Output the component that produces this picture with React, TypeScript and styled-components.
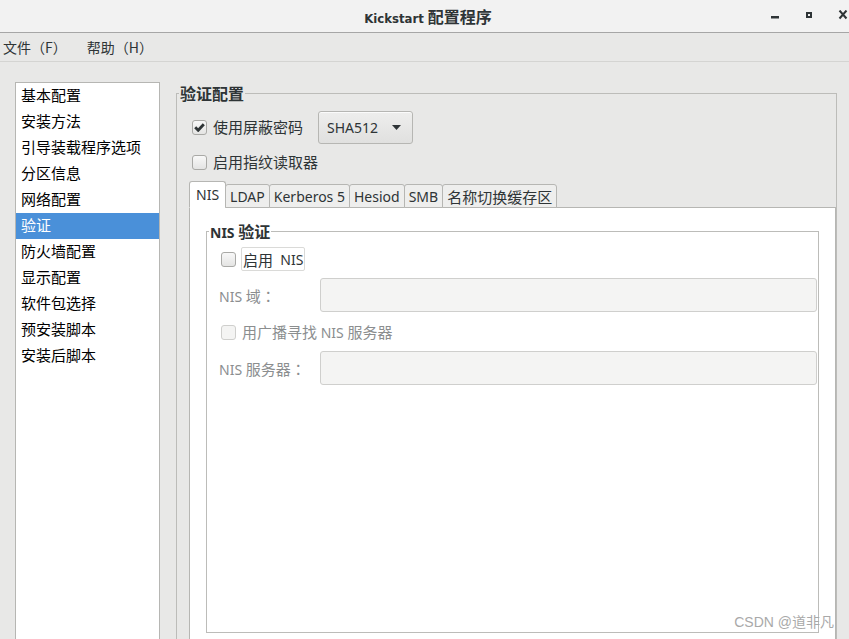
import React from 'react';
import styled, { createGlobalStyle } from 'styled-components';

const GlobalStyle = createGlobalStyle`
  html, body {
    margin: 0;
    padding: 0;
  }
  body {
    background: #e8e8e7;
    font-family: "Noto Sans", "Noto Sans CJK SC", sans-serif;
    font-size: 14px;
    color: #2e3436;
    overflow: hidden;
  }
`;

const Window = styled.div`
  position: relative;
  width: 849px;
  height: 639px;
  display: flex;
  flex-direction: column;
  overflow: hidden;
  background: #e8e8e7;
`;

const TitleBar = styled.div`
  flex: none;
  height: 32px;
  display: grid;
  grid-template-columns: 1fr auto 1fr;
  align-items: center;
  background: #f2f2f2;
  border-bottom: 1px solid #a6a6a6;
`;

const Title = styled.div`
  grid-column: 2;
  padding-left: 7px;
  font-family: "DejaVu Sans Condensed", "Liberation Sans", "Noto Sans CJK SC", sans-serif;
  font-weight: bold;
  font-size: 13px;
  color: #2e3436;
  white-space: nowrap;
`;

const WinButtons = styled.div`
  justify-self: end;
  display: flex;
  gap: 22px;
  height: 32px;
`;

const WinButton = styled.span`
  width: 12px;
  height: 32px;
  display: flex;
  align-items: center;
`;

const Zh = styled.span<{ $size?: number }>`
  font-family: "Noto Sans CJK SC", sans-serif;
  font-size: ${p => p.$size ?? 15}px;
`;

// centred full-width colon, as GTK draws it
const Colon = styled.span`
  font-family: "Noto Sans CJK JP", sans-serif;
  font-size: 15px;
`;

const MenuBar = styled.div`
  flex: none;
  height: 28px;
  display: flex;
  align-items: center;
  gap: 20px;
  padding-left: 3px;
  border-bottom: 1px solid #d4d4d2;
`;

const MenuItem = styled.span`
  font-family: "Noto Sans CJK SC", sans-serif;
  font-size: 14px;
  color: #2e3436;
`;

const Body = styled.div`
  flex: 1;
  min-height: 0;
  display: flex;
  align-items: flex-start;
  gap: 16px;
  padding: 20px 0 0 15px;
`;

const SideList = styled.ul`
  flex: none;
  width: 145px;
  height: 620px;
  box-sizing: border-box;
  margin: 0;
  padding: 0;
  list-style: none;
  background: #fff;
  border: 1px solid #b6b6b3;
`;

const SideItem = styled.li<{ $selected?: boolean }>`
  height: 26px;
  line-height: 24px;
  padding-left: 5px;
  font-family: "Noto Sans CJK SC", sans-serif;
  font-size: 15px;
  color: ${p => (p.$selected ? '#fff' : '#000')};
  background: ${p => (p.$selected ? '#4a90d9' : 'transparent')};
`;

const Frame = styled.fieldset`
  flex: none;
  width: 661px;
  height: 620px;
  box-sizing: border-box;
  margin: 1px 0 0 0;
  padding: 0;
  min-width: 0;
  border: 1px solid #bcbcb9;
`;

const FrameLegend = styled.legend`
  margin-left: 2px;
  padding: 0 1px;
  height: 20px;
  line-height: 20px;
  font-weight: bold;
  color: #2e3436;
`;

const FrameBody = styled.div`
  padding: 7px 0 0 12px;
  display: flex;
  flex-direction: column;
`;

const CheckRow = styled.div<{ $height: number; $top?: number; $indent?: number }>`
  display: flex;
  align-items: center;
  height: ${p => p.$height}px;
  margin-top: ${p => p.$top ?? 0}px;
  padding-left: ${p => p.$indent ?? 3}px;
`;

const Box = styled.span<{ $disabled?: boolean }>`
  flex: none;
  width: 15px;
  height: 15px;
  box-sizing: border-box;
  border: 1px solid ${p => (p.$disabled ? '#cfcfcd' : '#a9a9a6')};
  border-radius: 3px;
  background: ${p => (p.$disabled ? '#f4f4f3' : 'linear-gradient(#f8f8f8, #e4e4e3)')};
  display: flex;
  align-items: center;
  justify-content: center;
`;

const CheckText = styled.span<{ $disabled?: boolean }>`
  margin-left: 6px;
  line-height: 20px;
  color: ${p => (p.$disabled ? '#8b8e8f' : '#2e3436')};
  white-space: pre;
`;

const FocusLabel = styled.span`
  margin-left: 5px;
  height: 24px;
  box-sizing: border-box;
  padding: 0 1px;
  border: 1px solid #dadad8;
  border-radius: 2px;
  display: flex;
  align-items: center;
  white-space: pre;
  color: #2e3436;
`;

const Combo = styled.div`
  margin-left: 15px;
  width: 95px;
  height: 33px;
  box-sizing: border-box;
  padding: 0 11px 0 8px;
  display: flex;
  align-items: center;
  justify-content: space-between;
  border: 1px solid #b6b6b3;
  border-radius: 3px;
  background: linear-gradient(#eeeeed, #e0e0df);
  box-shadow: inset 0 1px #fbfbfb;
  color: #2e3436;
`;

const TabStrip = styled.div`
  margin-top: 7px;
  display: flex;
  align-items: flex-end;
  position: relative;
  z-index: 1;
  margin-bottom: -1px;
`;

const Tab = styled.div<{ $active?: boolean }>`
  height: ${p => (p.$active ? 27 : 24)}px;
  box-sizing: border-box;
  padding: 0 ${p => (p.$active ? 6 : 4)}px;
  margin-left: ${p => (p.$active ? 0 : -1)}px;
  display: flex;
  align-items: center;
  border: 1px solid #b6b6b3;
  border-bottom-color: ${p => (p.$active ? '#fff' : '#b6b6b3')};
  border-radius: 3px 3px 0 0;
  background: ${p => (p.$active ? '#fff' : '#eeeeed')};
  color: #2e3436;
  white-space: nowrap;
`;

const Panel = styled.div`
  height: 560px;
  box-sizing: border-box;
  padding: 13px 16px 0 16px;
  background: #fff;
  border: 1px solid #b6b6b3;
`;

const NisFrame = styled.fieldset`
  margin: 0;
  padding: 0;
  min-width: 0;
  height: 412px;
  box-sizing: border-box;
  border: 1px solid #bcbcb9;
`;

const NisBody = styled.div`
  display: flex;
  flex-direction: column;
`;

const FieldRow = styled.div`
  display: flex;
  align-items: center;
  height: 34px;
  margin-top: 7px;
  padding-left: 12px;
  margin-right: 1px;
`;

const FieldLabel = styled.span`
  flex: none;
  width: 101px;
  color: #8b8e8f;
  white-space: pre;
`;

const FieldInput = styled.div`
  flex: 1;
  height: 34px;
  box-sizing: border-box;
  border: 1px solid #cfcfcd;
  border-radius: 3px;
  background: #f4f4f3;
`;

const Watermark = styled.div`
  position: absolute;
  right: 15px;
  bottom: 8px;
  font-family: "Liberation Sans", "Noto Sans CJK SC", sans-serif;
  font-size: 14px;
  color: #a9a9a9;
`;

const Check = () => (
  <svg width="11" height="9" viewBox="0 0 11 9">
    <polyline points="1.2,4.3 4.2,7.3 9.8,1.2" fill="none" stroke="#2e3436" strokeWidth="2.8" />
  </svg>
);

const items = ['基本配置', '安装方法', '引导装载程序选项', '分区信息', '网络配置', '验证', '防火墙配置', '显示配置', '软件包选择', '预安装脚本', '安装后脚本'];

const tabs = ['LDAP', 'Kerberos 5', 'Hesiod', 'SMB'];

const App: React.FC = () => {
  return (
    <Window>
      <GlobalStyle />
      <TitleBar>
        <Title>
          Kickstart <Zh $size={16}>配置程序</Zh>
        </Title>
        <WinButtons>
          <WinButton>
            <svg width="12" height="12" viewBox="0 0 12 12">
              <rect x="2" y="6" width="8" height="2.5" fill="#2e3436" />
            </svg>
          </WinButton>
          <WinButton>
            <svg width="12" height="12" viewBox="0 0 12 12">
              <rect x="4" y="3" width="4" height="4" fill="none" stroke="#2e3436" strokeWidth="2" />
            </svg>
          </WinButton>
          <WinButton>
            <svg width="12" height="12" viewBox="0 0 12 12">
              <path d="M2.5 0.5 L9.5 8.5 M9.5 0.5 L2.5 8.5" stroke="#2e3436" strokeWidth="2" />
            </svg>
          </WinButton>
        </WinButtons>
      </TitleBar>

      <MenuBar>
        <MenuItem>文件（F）</MenuItem>
        <MenuItem>帮助（H）</MenuItem>
      </MenuBar>

      <Body>
        <SideList>
          {items.map(item => (
            <SideItem key={item} $selected={item === '验证'}>
              {item}
            </SideItem>
          ))}
        </SideList>

        <Frame>
          <FrameLegend>
            <Zh $size={16}>验证配置</Zh>
          </FrameLegend>
          <FrameBody>
            <CheckRow $height={34}>
              <Box>
                <Check />
              </Box>
              <CheckText>
                <Zh>使用屏蔽密码</Zh>
              </CheckText>
              <Combo>
                <span>SHA512</span>
                <svg width="9" height="5" viewBox="0 0 9 5">
                  <polygon points="0,0 9,0 4.5,5" fill="#2e3436" />
                </svg>
              </Combo>
            </CheckRow>
            <CheckRow $height={23} $top={7}>
              <Box />
              <CheckText>
                <Zh>启用指纹读取器</Zh>
              </CheckText>
            </CheckRow>

            <TabStrip>
              <Tab $active>NIS</Tab>
              {tabs.map(t => (
                <Tab key={t}>{t}</Tab>
              ))}
              <Tab>
                <Zh>名称切换缓存区</Zh>
              </Tab>
            </TabStrip>
            <Panel>
              <NisFrame>
                <FrameLegend>
                  NIS <Zh $size={16}>验证</Zh>
                </FrameLegend>
                <NisBody>
                  <CheckRow $height={24} $top={6} $indent={14}>
                    <Box />
                    <FocusLabel>
                      <Zh>启用</Zh>  NIS
                    </FocusLabel>
                  </CheckRow>
                  <FieldRow>
                    <FieldLabel>
                      NIS <Zh>域</Zh>
                      <Colon>：</Colon>
                    </FieldLabel>
                    <FieldInput />
                  </FieldRow>
                  <CheckRow $height={24} $top={8} $indent={14}>
                    <Box $disabled />
                    <CheckText $disabled>
                      <Zh>用广播寻找</Zh> NIS <Zh>服务器</Zh>
                    </CheckText>
                  </CheckRow>
                  <FieldRow>
                    <FieldLabel>
                      NIS <Zh>服务器</Zh>
                      <Colon>：</Colon>
                    </FieldLabel>
                    <FieldInput />
                  </FieldRow>
                </NisBody>
              </NisFrame>
            </Panel>
          </FrameBody>
        </Frame>
      </Body>

      <Watermark>CSDN @道非凡</Watermark>
    </Window>
  );
};

export default App;
